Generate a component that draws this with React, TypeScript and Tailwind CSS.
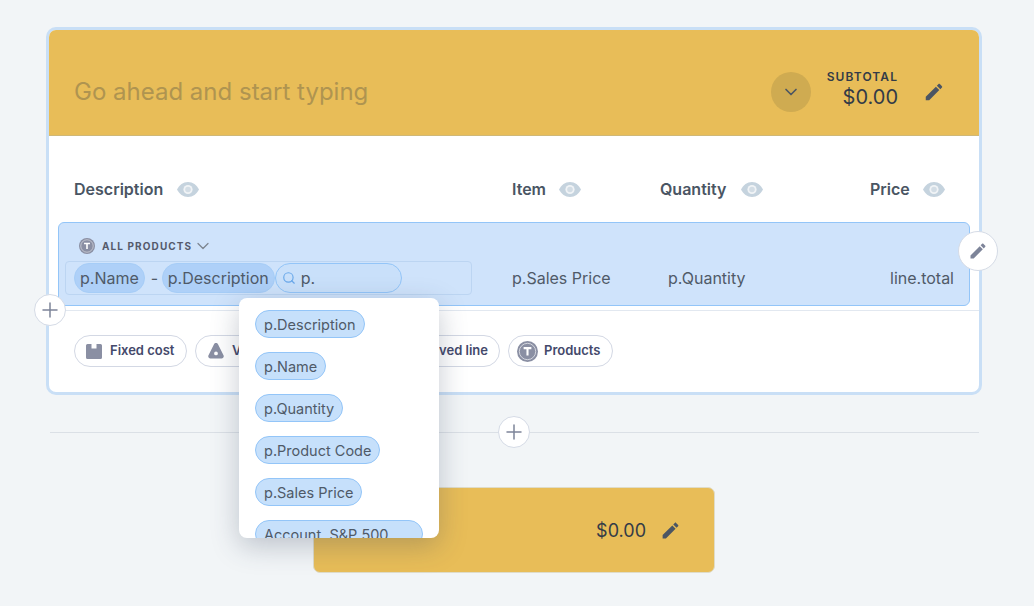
import { ChevronDown, Plus, Search } from 'lucide-react'

const pencilPath =
  'M3 17.25V21h3.75L17.81 9.94l-3.75-3.75L3 17.25zM20.71 7.04c.39-.39.39-1.02 0-1.41l-2.34-2.34c-.39-.39-1.02-.39-1.41 0l-1.83 1.83 3.75 3.75 1.83-1.83z'

const dropdownTokens = ['p.Description', 'p.Name', 'p.Quantity', 'p.Product Code', 'p.Sales Price']

function Pencil({ className }: { className: string }) {
  return (
    <svg viewBox="0 0 24 24" className={className} fill="currentColor">
      <path d={pencilPath} />
    </svg>
  )
}

function Eye() {
  return (
    <svg viewBox="0 0 22 15" className="h-[15px] w-[22px]">
      <path d="M0 7.5C2.2 3 6.2 0 11 0s8.800 3 11 7.500C19.800 12 15.800 15 11 15S2.200 12 0 7.500z" fill="#c5d3de" />
      <circle cx="11" cy="7.500" r="4.600" fill="#f0f3f6" />
      <circle cx="11" cy="7.500" r="2.800" fill="#d3dde5" />
    </svg>
  )
}

function TokenMark({ size }: { size: number }) {
  return (
    <svg viewBox="0 0 20 20" width={size} height={size}>
      <circle cx="10" cy="10" r="10" fill="#8a8fa3" />
      <circle cx="10" cy="10" r="7.800" fill="none" stroke="#fff" strokeOpacity="0.65" strokeWidth="0.9" />
      <path d="M6.300 6.800h7.400M10 6.800v7" stroke="#fff" strokeWidth="2" fill="none" />
    </svg>
  )
}

function CircleButton({ children, className }: { children: React.ReactNode; className: string }) {
  return (
    <div className={`absolute flex items-center justify-center rounded-full border border-[#d5dbe6] bg-white ${className}`}>
      {children}
    </div>
  )
}

function AddPill({ icon, label, className }: { icon: React.ReactNode; label: string; className: string }) {
  return (
    <div className={`flex h-8 shrink-0 items-center rounded-full border border-[#d3d8e4] bg-white text-[13px] font-semibold text-[#44496b] ${className}`}>
      {icon}
      <span>{label}</span>
    </div>
  )
}

export default function App() {
  return (
    <div className="relative h-[606px] w-[1034px] overflow-hidden bg-[#f2f5f7] pt-[27px] font-['Inter',sans-serif]">
      {/* Main section card */}
      <div className="relative ml-[46px] h-[368px] w-[936px] rounded-[10px] border-[3px] border-[#c9dff6] bg-white">
        <div className="flex h-[106px] items-center rounded-t-[7px] border-b border-[#cfb877] bg-[#e8bd58] pl-[25px] pr-[34px] pt-[18px]">
          <span className="flex-1 text-[24px] text-[#af9450]">Go ahead and start typing</span>
          <div className="flex h-10 w-10 items-center justify-center rounded-full bg-[#cfab51]">
            <ChevronDown className="h-5 w-5 text-[#4b5563]" strokeWidth={2} />
          </div>
          <div className="-mt-[4px] ml-4 flex flex-col items-end text-[#333b47]">
            <span className="text-[12px] font-semibold leading-[14px] tracking-[0.09em]">SUBTOTAL</span>
            <span className="text-[20px] leading-[26px]">$0.00</span>
          </div>
          <Pencil className="ml-[25px] h-[22px] w-[22px] text-[#4b5563]" />
        </div>

        <div className="mt-[41px] flex h-6 items-center text-[16px] font-semibold text-[#4a5563]">
          <div className="flex w-[463px] items-center gap-[14px] pl-[25px]">
            Description <Eye />
          </div>
          <div className="flex w-[148px] items-center gap-[13px]">
            Item <Eye />
          </div>
          <div className="flex w-[210px] items-center gap-[15px]">
            Quantity <Eye />
          </div>
          <div className="flex items-center gap-[13px]">
            Price <Eye />
          </div>
        </div>

        {/* Selected line */}
        <div className="mx-[9px] mt-[21px] h-[84px] rounded-[6px] border border-[#93c5f8] bg-[#cfe3fb] pl-[6px] pt-[14px]">
          <div className="ml-[14px] flex h-[18px] items-center">
            <TokenMark size={16} />
            <span className="ml-[7px] text-[10px] font-bold tracking-[0.11em] text-[#555a6b]">ALL PRODUCTS</span>
            <ChevronDown className="ml-[1px] h-5 w-5 text-[#7d8590]" strokeWidth={1.5} />
          </div>
          <div className="mt-[6px] flex items-center text-[16px] text-[#4f5a68]">
            <div className="flex h-[34px] w-[407px] items-center rounded-[4px] border border-[#bcd5f2] pl-2">
              <span className="flex h-[30px] items-center rounded-full border border-[#a6cdf7] bg-[#aed0f8] px-[5px]">p.Name</span>
              <span className="mx-[6px] w-[5px]">-</span>
              <span className="flex h-[30px] items-center rounded-full border border-[#a6cdf7] bg-[#aed0f8] px-[5px]">p.Description</span>
              <span className="flex h-[30px] w-[127px] items-center gap-[5px] rounded-full border border-[#93c5f8] bg-[#c9e0fa] pl-[6px]">
                <Search className="h-[14px] w-[14px] text-[#6aa9ea]" strokeWidth={2} />
                p.
              </span>
            </div>
            <span className="ml-[40px] w-[156px]">p.Sales Price</span>
            <span className="w-[222px]">p.Quantity</span>
            <span>line.total</span>
          </div>
        </div>

        <div className="mt-1 h-px bg-[#e2e8f0]" />
        <div className="ml-[25px] mt-6 flex gap-2">
          <AddPill
            className="w-[113px] gap-2 pl-[11px]"
            label="Fixed cost"
            icon={
              <svg viewBox="0 0 16 15" className="h-[15px] w-4" fill="#8a8fa3">
                <path d="M1.500 0H5.500v4.500h5V0h4A1.500 1.500 0 0 1 16 1.500v12a1.500 1.500 0 0 1-1.500 1.500h-13A1.500 1.500 0 0 1 0 13.500v-12A1.500 1.500 0 0 1 1.500 0z" />
              </svg>
            }
          />
          <AddPill
            className="w-[125px] gap-2 pl-[12px]"
            label="Variable cost"
            icon={
              <svg viewBox="0 0 16 16" className="h-4 w-4" fill="#8a8fa3">
                <path
                  fillRule="evenodd"
                  d="M8 0c.9 0 1.600.5 2 1.200l5.500 11c.8 1.500-.2 3.300-1.900 3.300H2.400c-1.700 0-2.700-1.800-1.900-3.300l5.500-11C6.400.5 7.100 0 8 0zm0 8.500a1.900 1.900 0 1 0 0 3.800 1.900 1.900 0 0 0 0-3.800z"
                />
              </svg>
            }
          />
          <AddPill className="w-[172px] justify-end pr-[11px]" label="Saved line" icon={null} />
          <AddPill className="w-[105px] gap-[6px] pl-[8px]" label="Products" icon={<TokenMark size={21} />} />
        </div>

        <CircleButton className="-left-[15px] top-[264px] h-8 w-8">
          <Plus className="h-6 w-6 text-[#7d8499]" strokeWidth={1.5} />
        </CircleButton>
        <CircleButton className="-right-[19px] top-[201px] h-10 w-10">
          <Pencil className="h-5 w-5 text-[#7d8499]" />
        </CircleButton>
      </div>

      {/* Divider with add button */}
      <div className="relative ml-[50px] mt-[37px] h-px w-[929px] bg-[#dbe0e6]">
        <CircleButton className="left-[448px] -top-4 h-8 w-8">
          <Plus className="h-6 w-6 text-[#7d8499]" strokeWidth={1.5} />
        </CircleButton>
      </div>

      {/* Total block */}
      <div className="ml-[313px] mt-[54px] flex h-[86px] w-[402px] items-center justify-end rounded-[7px] border border-[#dfdcc9] bg-[#e8bd58] pr-[33px] text-[#333b47]">
        <span className="text-[18px]">$0.00</span>
        <Pencil className="ml-[14px] h-[21px] w-[21px] text-[#4b5563]" />
      </div>

      {/* Token dropdown */}
      <div className="absolute left-[239px] top-[298px] flex h-[240px] w-[200px] flex-col items-start gap-[14px] overflow-hidden rounded-[8px] bg-white pl-4 pt-[12px] shadow-[0_8px_28px_rgba(50,65,90,0.28)]">
        {dropdownTokens.map((token) => (
          <span
            key={token}
            className="flex h-[28px] shrink-0 items-center rounded-full border border-[#93c5f8] bg-[#c6e0fb] px-[8px] pt-[2px] text-[14.500px] text-[#4f5a68]"
          >
            {token}
          </span>
        ))}
        <span className="flex h-[28px] w-[168px] shrink-0 items-center rounded-full border border-[#93c5f8] bg-[#c6e0fb] px-[8px] pt-[2px] text-[14.500px] text-[#4f5a68]">
          Account. S&amp;P 500
        </span>
      </div>
    </div>
  )
}
